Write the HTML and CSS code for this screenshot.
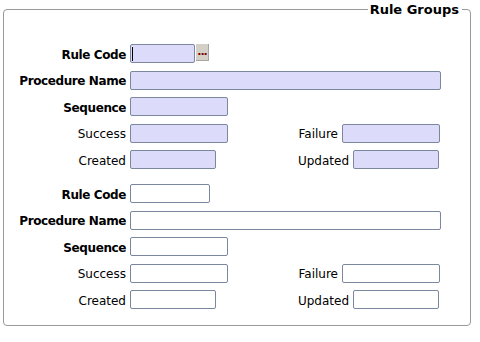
FILE: index.html
```html
<!DOCTYPE html>
<html lang="en">
<head>
    <meta charset="UTF-8">
    <title>Rule Groups</title>
    <link rel="stylesheet" href="styles.css">
</head>
<body>
<fieldset class="groups">
    <legend>Rule Groups</legend>
    <div class="grid">
        <label class="lbl b">Rule Code</label>
        <div class="fld"><input class="txt w65 caret" type="text"><span class="more">...</span></div>

        <label class="lbl b">Procedure Name</label>
        <div class="fld"><input class="txt wfull" type="text"></div>

        <label class="lbl b">Sequence</label>
        <div class="fld"><input class="txt w98" type="text"></div>

        <label class="lbl">Success</label>
        <div class="fld"><input class="txt w98" type="text">
            <div class="pair"><label class="lbl">Failure</label><input class="txt w98" type="text"></div>
        </div>

        <label class="lbl">Created</label>
        <div class="fld"><input class="txt w86" type="text">
            <div class="pair p2"><label class="lbl">Updated</label><input class="txt w86" type="text"></div>
        </div>
    </div>

    <div class="grid blank">
        <label class="lbl b">Rule Code</label>
        <div class="fld"><input class="txt w80" type="text"></div>

        <label class="lbl b">Procedure Name</label>
        <div class="fld"><input class="txt wfull" type="text"></div>

        <label class="lbl b">Sequence</label>
        <div class="fld"><input class="txt w98" type="text"></div>

        <label class="lbl">Success</label>
        <div class="fld"><input class="txt w98" type="text">
            <div class="pair"><label class="lbl">Failure</label><input class="txt w98" type="text"></div>
        </div>

        <label class="lbl">Created</label>
        <div class="fld"><input class="txt w86" type="text">
            <div class="pair p2"><label class="lbl">Updated</label><input class="txt w86" type="text"></div>
        </div>
    </div>
</fieldset>
</body>
</html>
```

FILE: styles.css
```css
body {
    margin: 0;
    background: #fff;
    font-family: "DejaVu Sans", sans-serif;
    font-size: 12px;
    color: #000;
}

.groups {
    box-sizing: border-box;
    width: 468px;
    height: 325px;
    margin: 1px 0 0 3px;
    padding: 0;
    border: 1px solid #999;
    border-radius: 4px;
}

.groups > legend {
    margin-left: auto;
    margin-right: 8px;
    padding: 0 3px 0 2px;
    font-weight: bold;
    font-size: 13px;
    line-height: 17px;
}

.grid {
    display: grid;
    grid-template-columns: 122px 311px;
    grid-auto-rows: 19px;
    column-gap: 4px;
    row-gap: 7.5px;
    margin-top: 26px;
}

.grid.blank {
    margin-top: 15px;
}

.lbl {
    align-self: center;
    text-align: right;
    padding-top: 2px;
    white-space: nowrap;
}

.lbl.b {
    font-weight: bold;
    letter-spacing: -0.4px;
}

.fld {
    display: flex;
    align-items: flex-start;
}

.txt {
    box-sizing: border-box;
    height: 19px;
    margin: 0;
    padding: 0 2px;
    border: 1px solid #7a879e;
    border-radius: 2px;
    background: #dcdcfa;
    font: 12px "DejaVu Sans", sans-serif;
}

.blank .txt {
    background: #fff;
}

.caret {
    background: linear-gradient(#000, #000) 1px 2px / 1px 14px no-repeat, #dcdcfa;
}

.w65 { width: 65px; }
.w80 { width: 80px; }
.w86 { width: 86px; }
.w98 { width: 98px; }
.wfull { width: 311px; }

.more {
    box-sizing: border-box;
    width: 13px;
    height: 17px;
    margin-left: 1px;
    background: #d4d0c8;
    border-right: 1px solid #a8a59e;
    border-bottom: 1px solid #a8a59e;
    color: #800000;
    font-weight: bold;
    font-size: 11px;
    line-height: 15px;
    text-align: center;
    letter-spacing: -1px;
}

.pair {
    display: flex;
    align-items: flex-start;
    gap: 4px;
    margin-left: auto;
    margin-right: 1px;
}

.pair.p2 {
    margin-right: 2px;
}
```
